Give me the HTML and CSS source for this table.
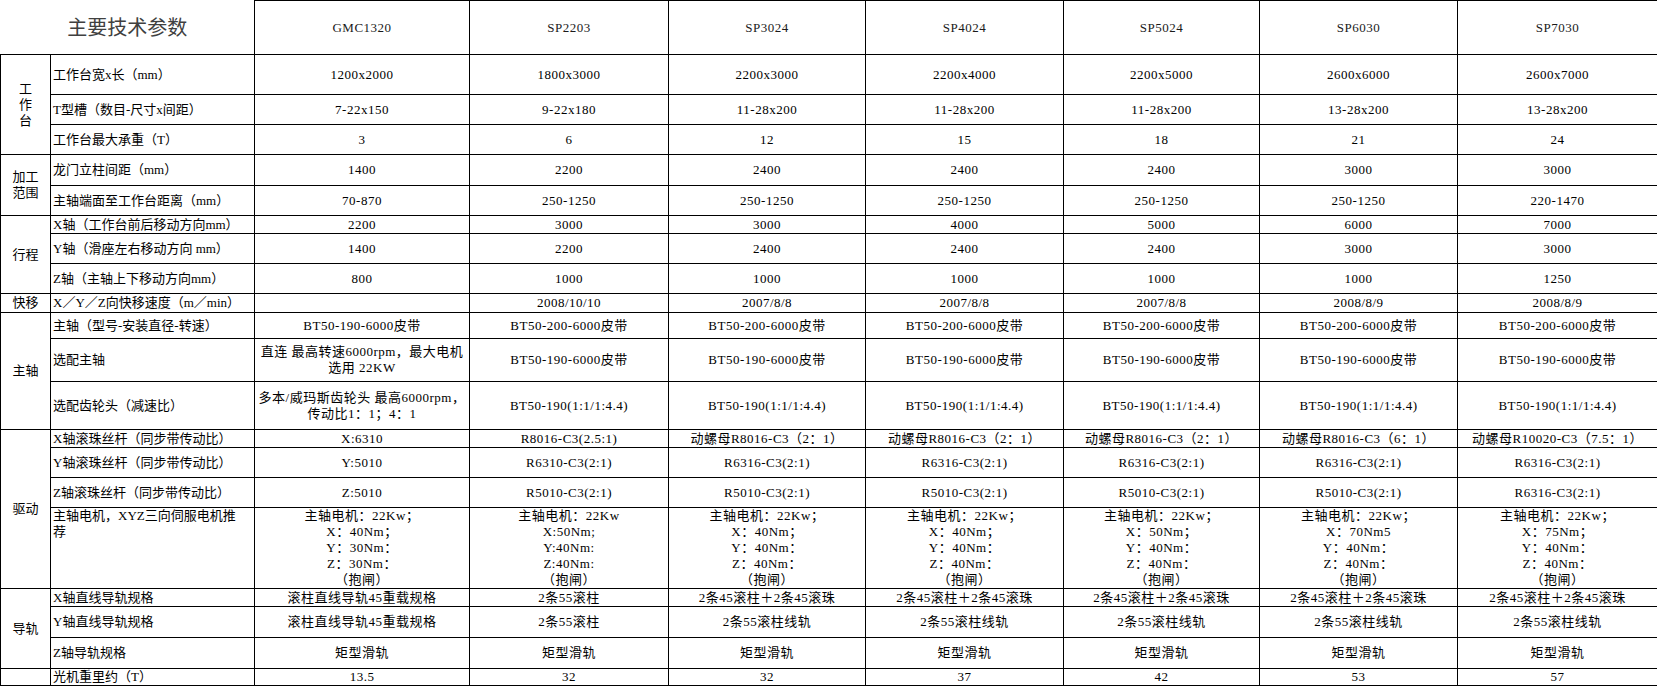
FILE: index.html
```html
<!DOCTYPE html>
<html lang="zh">
<head>
<meta charset="utf-8">
<title>主要技术参数</title>
<link rel="stylesheet" href="styles.css">
</head>
<body>
<table class="spec">
  <colgroup>
    <col class="c-group">
    <col class="c-label">
    <col class="c-first">
    <col class="c-199">
    <col class="c-197">
    <col class="c-198">
    <col class="c-196">
    <col class="c-198">
    <col class="c-200">
  </colgroup>
  <tbody>
    <tr class="r54 head">
      <td class="title" colspan="2">主要技术参数</td>
      <td>GMC1320</td><td>SP2203</td><td>SP3024</td><td>SP4024</td><td>SP5024</td><td>SP6030</td><td>SP7030</td>
    </tr>
    <tr class="r40">
      <td class="group" rowspan="3">工<br>作<br>台</td>
      <td class="label">工作台宽x长（mm）</td>
      <td>1200x2000</td><td>1800x3000</td><td>2200x3000</td><td>2200x4000</td><td>2200x5000</td><td>2600x6000</td><td>2600x7000</td>
    </tr>
    <tr class="r30">
      <td class="label">T型槽（数目-尺寸x间距）</td>
      <td>7-22x150</td><td>9-22x180</td><td>11-28x200</td><td>11-28x200</td><td>11-28x200</td><td>13-28x200</td><td>13-28x200</td>
    </tr>
    <tr class="r30">
      <td class="label">工作台最大承重（T）</td>
      <td>3</td><td>6</td><td>12</td><td>15</td><td>18</td><td>21</td><td>24</td>
    </tr>
    <tr class="r31">
      <td class="group" rowspan="2">加工<br>范围</td>
      <td class="label">龙门立柱间距（mm）</td>
      <td>1400</td><td>2200</td><td>2400</td><td>2400</td><td>2400</td><td>3000</td><td>3000</td>
    </tr>
    <tr class="r30">
      <td class="label">主轴端面至工作台距离（mm）</td>
      <td>70-870</td><td>250-1250</td><td>250-1250</td><td>250-1250</td><td>250-1250</td><td>250-1250</td><td>220-1470</td>
    </tr>
    <tr class="r18">
      <td class="group" rowspan="3">行程</td>
      <td class="label">X轴（工作台前后移动方向mm）</td>
      <td>2200</td><td>3000</td><td>3000</td><td>4000</td><td>5000</td><td>6000</td><td>7000</td>
    </tr>
    <tr class="r30">
      <td class="label">Y轴（滑座左右移动方向 mm）</td>
      <td>1400</td><td>2200</td><td>2400</td><td>2400</td><td>2400</td><td>3000</td><td>3000</td>
    </tr>
    <tr class="r30">
      <td class="label">Z轴（主轴上下移动方向mm）</td>
      <td>800</td><td>1000</td><td>1000</td><td>1000</td><td>1000</td><td>1000</td><td>1250</td>
    </tr>
    <tr class="r19">
      <td class="group">快移</td>
      <td class="label">X／Y／Z向快移速度（m／min）</td>
      <td></td><td>2008/10/10</td><td>2007/8/8</td><td>2007/8/8</td><td>2007/8/8</td><td>2008/8/9</td><td>2008/8/9</td>
    </tr>
    <tr class="r26">
      <td class="group" rowspan="3">主轴</td>
      <td class="label">主轴（型号-安装直径-转速）</td>
      <td>BT50-190-6000皮带</td><td>BT50-200-6000皮带</td><td>BT50-200-6000皮带</td><td>BT50-200-6000皮带</td><td>BT50-200-6000皮带</td><td>BT50-200-6000皮带</td><td>BT50-200-6000皮带</td>
    </tr>
    <tr class="r43">
      <td class="label">选配主轴</td>
      <td>直连 最高转速6000rpm，最大电机<br>选用 22KW</td><td>BT50-190-6000皮带</td><td>BT50-190-6000皮带</td><td>BT50-190-6000皮带</td><td>BT50-190-6000皮带</td><td>BT50-190-6000皮带</td><td>BT50-190-6000皮带</td>
    </tr>
    <tr class="r48">
      <td class="label">选配齿轮头（减速比）</td>
      <td>多本/威玛斯齿轮头 最高6000rpm，<br>传动比1：1；4：1</td><td>BT50-190(1:1/1:4.4)</td><td>BT50-190(1:1/1:4.4)</td><td>BT50-190(1:1/1:4.4)</td><td>BT50-190(1:1/1:4.4)</td><td>BT50-190(1:1/1:4.4)</td><td>BT50-190(1:1/1:4.4)</td>
    </tr>
    <tr class="r18">
      <td class="group" rowspan="4">驱动</td>
      <td class="label">X轴滚珠丝杆（同步带传动比）</td>
      <td>X:6310</td><td>R8016-C3(2.5:1)</td><td>动螺母R8016-C3（2：1）</td><td>动螺母R8016-C3（2：1）</td><td>动螺母R8016-C3（2：1）</td><td>动螺母R8016-C3（6：1）</td><td>动螺母R10020-C3（7.5：1）</td>
    </tr>
    <tr class="r30">
      <td class="label">Y轴滚珠丝杆（同步带传动比）</td>
      <td>Y:5010</td><td>R6310-C3(2:1)</td><td>R6316-C3(2:1)</td><td>R6316-C3(2:1)</td><td>R6316-C3(2:1)</td><td>R6316-C3(2:1)</td><td>R6316-C3(2:1)</td>
    </tr>
    <tr class="r30">
      <td class="label">Z轴滚珠丝杆（同步带传动比）</td>
      <td>Z:5010</td><td>R5010-C3(2:1)</td><td>R5010-C3(2:1)</td><td>R5010-C3(2:1)</td><td>R5010-C3(2:1)</td><td>R5010-C3(2:1)</td><td>R6316-C3(2:1)</td>
    </tr>
    <tr class="r81">
      <td class="label top">主轴电机，XYZ三向伺服电机推<br>荐</td>
      <td>主轴电机：22Kw；<br>X：40Nm；<br>Y：30Nm：<br>Z：30Nm：<br>（抱闸）</td>
      <td>主轴电机：22Kw<br>X:50Nm;<br>Y:40Nm:<br>Z:40Nm:<br>（抱闸）</td>
      <td>主轴电机：22Kw；<br>X：40Nm；<br>Y：40Nm：<br>Z：40Nm：<br>（抱闸）</td>
      <td>主轴电机：22Kw；<br>X：40Nm；<br>Y：40Nm：<br>Z：40Nm：<br>（抱闸）</td>
      <td>主轴电机：22Kw；<br>X：50Nm；<br>Y：40Nm：<br>Z：40Nm：<br>（抱闸）</td>
      <td>主轴电机：22Kw；<br>X：70Nm5<br>Y：40Nm：<br>Z：40Nm：<br>（抱闸）</td>
      <td>主轴电机：22Kw；<br>X：75Nm；<br>Y：40Nm：<br>Z：40Nm：<br>（抱闸）</td>
    </tr>
    <tr class="r18">
      <td class="group" rowspan="3">导轨</td>
      <td class="label">X轴直线导轨规格</td>
      <td>滚柱直线导轨45重载规格</td><td>2条55滚柱</td><td>2条45滚柱＋2条45滚珠</td><td>2条45滚柱＋2条45滚珠</td><td>2条45滚柱＋2条45滚珠</td><td>2条45滚柱＋2条45滚珠</td><td>2条45滚柱＋2条45滚珠</td>
    </tr>
    <tr class="r31">
      <td class="label">Y轴直线导轨规格</td>
      <td>滚柱直线导轨45重载规格</td><td>2条55滚柱</td><td>2条55滚柱线轨</td><td>2条55滚柱线轨</td><td>2条55滚柱线轨</td><td>2条55滚柱线轨</td><td>2条55滚柱线轨</td>
    </tr>
    <tr class="r31">
      <td class="label">Z轴导轨规格</td>
      <td>矩型滑轨</td><td>矩型滑轨</td><td>矩型滑轨</td><td>矩型滑轨</td><td>矩型滑轨</td><td>矩型滑轨</td><td>矩型滑轨</td>
    </tr>
    <tr class="r17">
      <td class="group"></td>
      <td class="label">光机重里约（T）</td>
      <td>13.5</td><td>32</td><td>32</td><td>37</td><td>42</td><td>53</td><td>57</td>
    </tr>
  </tbody>
</table>
</body>
</html>
```

FILE: styles.css
```css
html, body {
  margin: 0;
  padding: 0;
  background: #ffffff;
}

.spec {
  border-collapse: collapse;
  table-layout: fixed;
  width: 1657px;
  font-family: "Liberation Serif", "Noto Sans CJK SC", serif;
  font-size: 13px;
  letter-spacing: 0.5px;
  line-height: 16px;
  color: #000000;
}

.c-group { width: 50px; }
.c-label { width: 204px; }
.c-first { width: 215px; }
.c-199 { width: 199px; }
.c-197 { width: 197px; }
.c-198 { width: 198px; }
.c-196 { width: 196px; }
.c-200 { width: 200px; }

.spec td {
  border: 1px solid #000000;
  padding: 0;
  text-align: center;
  vertical-align: middle;
  white-space: nowrap;
  overflow: hidden;
}

.spec td.label {
  text-align: left;
  padding-left: 2px;
  letter-spacing: 0;
}

.spec td.group {
  letter-spacing: 0;
}

.spec td.top {
  vertical-align: top;
}

.spec .head td {
  color: #1a1a1a;
}

.spec td.title {
  border-top: none;
  border-left: none;
  font-size: 20px;
  letter-spacing: 0;
  color: #404040;
  padding-top: 2px;
}

.r54 { height: 54px; }
.r40 { height: 40px; }
.r31 { height: 31px; }
.r30 { height: 30px; }
.r26 { height: 26px; }
.r19 { height: 19px; }
.r18 { height: 18px; }
.r17 { height: 17px; }
.r43 { height: 43px; }
.r48 { height: 48px; }
.r81 { height: 81px; }
```
